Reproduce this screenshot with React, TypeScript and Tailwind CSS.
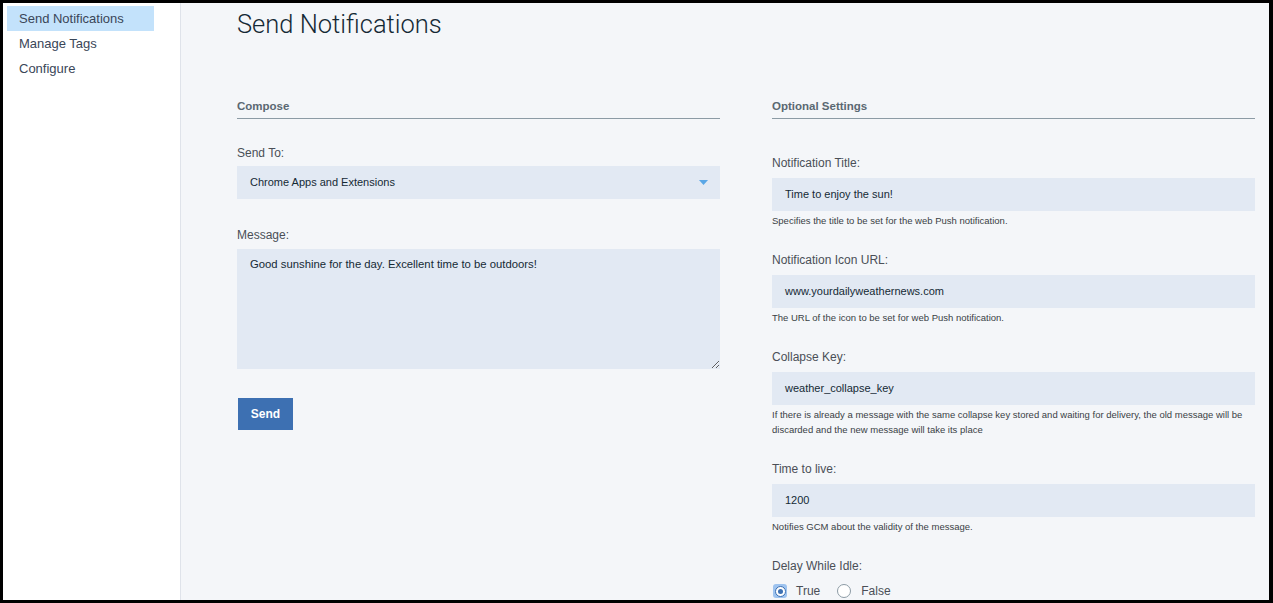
import React from "react";

const FONT = { fontFamily: '"Liberation Sans", Arial, sans-serif' };

function Field({ label, value, help }: { label: string; value: string; help: string }) {
  return (
    <div className="mt-[24px]">
      <div className="text-[12px] leading-[16px] text-[#4a4f57]">{label}</div>
      <div className="mt-[7px] h-[33px] bg-[#e2e9f3] flex items-center pl-[13px] text-[11px] text-[#152935]">{value}</div>
      <div className="mt-[2px] text-[9.5px] leading-[15px] text-[#3a3f45]">{help}</div>
    </div>
  );
}

export default function App() {
  return (
    <div
      className="h-[603px] w-[1273px] flex overflow-hidden border-black border-t-[3px] border-l-[3px] border-r-[4px] border-b-[3px] bg-white"
      style={FONT}
    >
      <aside className="w-[178px] shrink-0 bg-white border-r border-[#dfe3ea] pt-[3px] pl-[4px]">
        <div className="h-[25px] w-[147px] bg-[#c3e2fb] flex items-center pl-[12px] text-[13px] text-[#3a4658]">Send Notifications</div>
        <div className="h-[25px] flex items-center pl-[12px] text-[13px] text-[#3a4658]">Manage Tags</div>
        <div className="h-[25px] flex items-center pl-[12px] text-[13px] text-[#3a4658]">Configure</div>
      </aside>
      <main className="flex-1 bg-[#f4f6f9] pl-[56px]">
        <h1
          className="text-[25.5px] leading-[30px] pt-[6px] text-[#152935] font-light"
          style={{ fontFamily: 'Roboto, "Liberation Sans", sans-serif' }}
        >
          Send Notifications
        </h1>
        <div className="flex gap-[52px] mt-[60px]">
          <section className="w-[483px]">
            <div className="text-[11.5px] font-bold text-[#5a6872] leading-[14px] pb-[5px] border-b border-[#8c9ba5]">Compose</div>
            <div className="mt-[26px] text-[12px] leading-[16px] text-[#4a4f57]">Send To:</div>
            <div className="mt-[5px] h-[33px] bg-[#e2e9f3] flex items-center justify-between pl-[13px] pr-[12px] text-[11px] text-[#152935]">
              <span>Chrome Apps and Extensions</span>
              <svg width="9" height="5" viewBox="0 0 9 5"><path d="M0 0h9L4.5 5z" fill="#5aa7e6" /></svg>
            </div>
            <div className="mt-[28px] text-[12px] leading-[16px] text-[#4a4f57]">Message:</div>
            <textarea
              readOnly
              defaultValue="Good sunshine for the day. Excellent time to be outdoors!"
              className="mt-[6px] block w-[483px] h-[120px] bg-[#e2e9f3] pl-[13px] pt-[8px] text-[11.3px] leading-[15px] text-[#152935] outline-none resize-y"
              style={FONT}
            />
            <button className="mt-[29px] w-[55px] h-[32px] bg-[#3d70b2] text-white text-[12px] font-bold ml-[1px]">Send</button>
          </section>
          <section className="w-[483px]">
            <div className="text-[11.5px] font-bold text-[#5a6872] leading-[14px] pb-[5px] border-b border-[#8c9ba5]">Optional Settings</div>
            <div className="pt-[12px]">
              <Field label="Notification Title:" value="Time to enjoy the sun!" help="Specifies the title to be set for the web Push notification." />
              <Field label="Notification Icon URL:" value="www.yourdailyweathernews.com" help="The URL of the icon to be set for web Push notification." />
              <Field
                label="Collapse Key:"
                value="weather_collapse_key"
                help="If there is already a message with the same collapse key stored and waiting for delivery, the old message will be discarded and the new message will take its place"
              />
              <Field label="Time to live:" value="1200" help="Notifies GCM about the validity of the message." />
              <div className="mt-[24px]">
                <div className="text-[12px] leading-[16px] text-[#4a4f57]">Delay While Idle:</div>
                <div className="mt-[8px] flex items-center text-[12px] text-[#4a4f57]">
                  <span className="w-[14px] h-[14px] rounded-[3px] bg-[#9ec3ef] flex items-center justify-center ml-[1px]">
                    <span className="w-[11px] h-[11px] rounded-full bg-white border border-[#3d70b2] flex items-center justify-center">
                      <span className="w-[5px] h-[5px] rounded-full bg-[#3d70b2]" />
                    </span>
                  </span>
                  <span className="ml-[9px]">True</span>
                  <span className="ml-[17px] w-[14px] h-[14px] rounded-full border border-[#8c9ba5] bg-white" />
                  <span className="ml-[10px]">False</span>
                </div>
              </div>
            </div>
          </section>
        </div>
      </main>
    </div>
  );
}
